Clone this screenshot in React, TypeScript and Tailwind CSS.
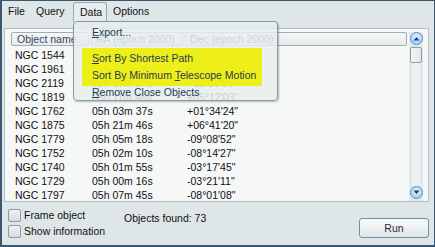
import React from "react";

const rows: [string, string, string][] = [
  ["NGC 1544", "05h 02m 36s", "+86°13'22\""],
  ["NGC 1961", "05h 42m 04s", "+69°22'43\""],
  ["NGC 2119", "05h 57m 27s", "+11°56'56\""],
  ["NGC 1819", "05h 11m 46s", "+05°12'03\""],
  ["NGC 1762", "05h 03m 37s", "+01°34'24\""],
  ["NGC 1875", "05h 21m 46s", "+06°41'20\""],
  ["NGC 1779", "05h 05m 18s", "-09°08'52\""],
  ["NGC 1752", "05h 02m 10s", "-08°14'27\""],
  ["NGC 1740", "05h 01m 55s", "-03°17'45\""],
  ["NGC 1729", "05h 00m 16s", "-03°21'11\""],
  ["NGC 1797", "05h 07m 45s", "-08°01'08\""],
];

function ArrowBtn({ up }: { up: boolean }) {
  return (
    <div className="w-[13px] h-[13px] rounded-full border border-[#4f8fcf] bg-[radial-gradient(circle_at_50%_35%,#e2f1fd,#93c6f0)] flex items-center justify-center">
      <svg width="7" height="5" viewBox="0 0 7 5">
        {up ? (
          <path d="M0.5 4.5 L3.5 1 L6.5 4.5 Z" fill="#17467a" />
        ) : (
          <path d="M0.5 0.5 L3.5 4 L6.5 0.5 Z" fill="#17467a" />
        )}
      </svg>
    </div>
  );
}

function Check({ label }: { label: string }) {
  return (
    <div className="flex items-center h-[13px]">
      <div className="w-[13px] h-[13px] rounded-[2px] border border-[#8c9ba2] bg-gradient-to-b from-[#eef2f3] to-[#d5dde0]" />
      <span className="ml-[3px]">{label}</span>
    </div>
  );
}

export default function App() {
  return (
    <div
      className="relative w-[435px] h-[247px] overflow-hidden bg-[#dfe6e8] border-l-2 border-b-2 border-t border-r border-[#3b566f] text-[10.5px] text-[#111] leading-none"
      style={{ fontFamily: '"Liberation Sans", Arial, sans-serif' }}
    >
      {/* Menu bar */}
      <div className="flex h-[21px] items-stretch">
        <div className="w-[28px] pl-[6px] flex items-center">File</div>
        <div className="w-[43px] pl-[6px] flex items-center">Query</div>
        <div className="w-[34px] pl-[6px] flex items-center mt-[1px] border border-b-0 border-[#9aa6ab] rounded-t-[3px] bg-[#e6ecee]">
          Data
        </div>
        <div className="pl-[6px] flex items-center">Options</div>
      </div>

      {/* List box */}
      <div className="ml-[2px] mt-[6px] w-[425px] h-[174px] border border-[#b3bec2] bg-[#f6f7f7] flex pt-[3px] pl-[6px] pr-[3px]">
        <div className="w-[396px] flex flex-col overflow-hidden">
          <div className="flex h-[14px] shrink-0 text-[#2f475d]">
            <div className="w-[78px] border border-[#9fadb3] rounded-[2px] bg-gradient-to-b from-[#f6f6f6] to-[#e9ecec] pl-[5px] flex items-center">
              Object name
            </div>
            <div className="w-[92px] ml-[2px] border border-[#9fadb3] rounded-[2px] bg-gradient-to-b from-[#f6f6f6] to-[#e9ecec] pl-[4px] flex items-center">
              RA (epoch 2000)
            </div>
            <div className="flex-1 ml-[2px] border border-[#9fadb3] rounded-[2px] bg-gradient-to-b from-[#f6f6f6] to-[#e9ecec] pl-[4px] flex items-center">
              Dec (epoch 2000)
            </div>
          </div>
          <div className="mt-[2px] flex flex-col">
            {rows.map((r) => (
              <div key={r[0]} className="flex h-[14px] shrink-0 items-center">
                <div className="w-[81px] pl-[4px]">{r[0]}</div>
                <div className="w-[95px]">{r[1]}</div>
                <div>{r[2]}</div>
              </div>
            ))}
          </div>
        </div>
        {/* Scrollbar */}
        <div className="ml-[2px] w-[14px] flex flex-col items-center bg-[#e3e9eb]">
          <ArrowBtn up />
          <div className="mt-[2px] w-[12px] h-[16px] rounded-[2px] border border-[#8f9ca3] bg-gradient-to-r from-[#f4f6f7] to-[#e3e8ea]" />
          <div className="flex-1 w-[8px] bg-[#eef1f2]" />
          <div className="mb-[2px]">
            <ArrowBtn up={false} />
          </div>
        </div>
      </div>

      {/* Bottom area */}
      <div className="flex pl-[6px] pt-[7px]">
        <div className="flex flex-col gap-[3px] w-[116px]">
          <Check label="Frame object" />
          <Check label="Show information" />
        </div>
        <div className="mt-[4px]">Objects found: 73</div>
        <div className="ml-auto mr-[5px] mt-[9px] w-[70px] h-[20px] rounded-[3px] border border-[#6f8ca6] bg-gradient-to-b from-[#fafbfb] via-[#eef1f2] to-[#dfe5e7] flex items-center justify-center text-[#1d2b38]">
          Run
        </div>
      </div>

      {/* Dropdown menu overlay */}
      <div className="absolute left-[71px] top-[20px] w-[205px] h-[80px] rounded-[4px] border border-[#8c999f] bg-[#e7edef]/85 shadow-[1px_1px_2px_rgba(0,0,0,0.25)] text-[#1f3a55]">
        <div className="absolute left-[8px] top-[26px] w-[180px] h-[38px] bg-[#eeee00]/90" />
        <div className="relative pt-[2px]">
          <div className="h-[17px] pl-[18px] flex items-center">
            <span><span className="underline">E</span>xport...</span>
          </div>
          <div className="h-[9px]" />
          <div className="h-[17px] pl-[18px] flex items-center">
            <span><span className="underline">S</span>ort By Shortest Path</span>
          </div>
          <div className="h-[17px] pl-[18px] flex items-center">
            <span>Sort By Minimum <span className="underline">T</span>elescope Motion</span>
          </div>
          <div className="h-[17px] pl-[18px] flex items-center">
            <span><span className="underline">R</span>emove Close Objects</span>
          </div>
        </div>
      </div>
    </div>
  );
}
